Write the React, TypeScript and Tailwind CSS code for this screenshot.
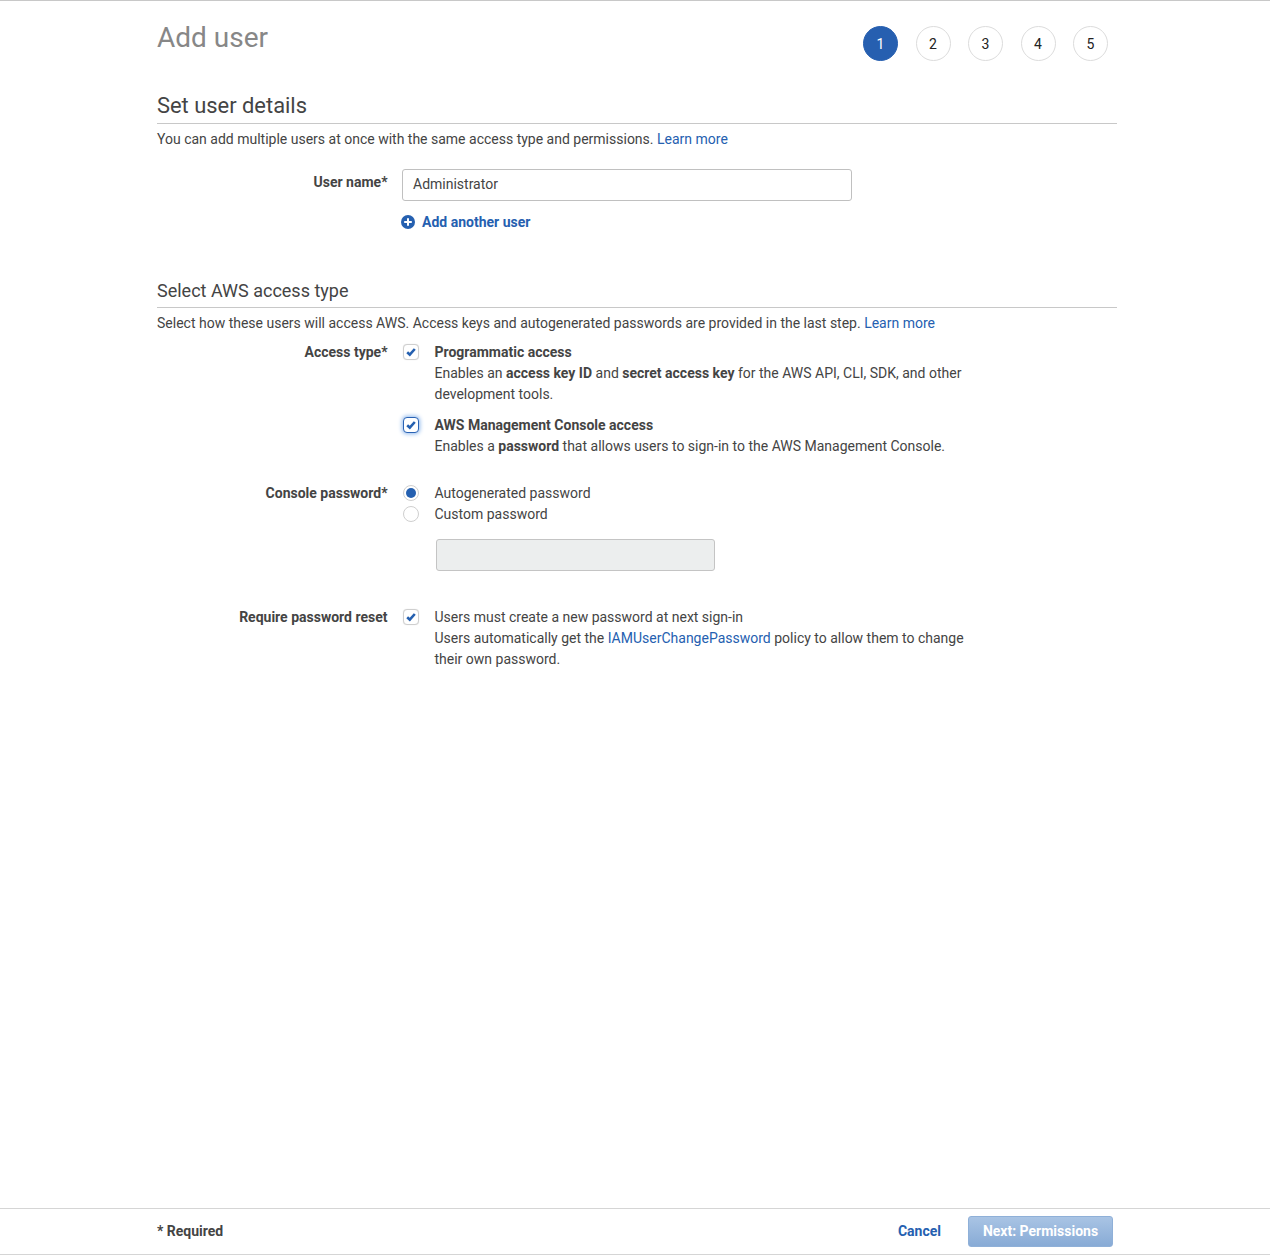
import React from "react";

const Check = ({ focus }: { focus?: boolean }) => (
  <span className={`ml-[1px] flex h-[16px] w-[16px] items-center justify-center rounded-[4px] border bg-white ${focus ? "border-[#2a63b5] shadow-[0_0_4px_1px_#8fb8ec]" : "border-[#cfcfcf] shadow-[0_0_1px_0_#d8d8d8]"}`}>
    <svg width="12" height="12" viewBox="0 0 12 12" fill="none" stroke="#2560b0" strokeWidth="2.6"><path d="M2.2 6.2 L4.8 8.6 L9.8 3" /></svg>
  </span>
);

const Row = ({ label, children, className, labelClass }: { label: string; children: React.ReactNode; className?: string; labelClass?: string }) => (
  <div className={`flex ${className ?? ""}`}>
    <div className={`w-[230.5px] text-right font-bold text-[#444] ${labelClass ?? ""}`}>{label}</div>
    <div className="ml-[14.5px] flex-1">{children}</div>
  </div>
);

const Opt = ({ icon, children }: { icon: React.ReactNode; children: React.ReactNode }) => (
  <div className="flex">
    <div className="flex h-[20px] w-[32.5px] shrink-0 items-center">{icon}</div>
    <div className="w-[540px]">{children}</div>
  </div>
);

export default function App() {
  return (
    <div className="flex h-[1255px] flex-col border-t border-[#c8c8c8] bg-white font-['Roboto',sans-serif] text-[14px] leading-[21px] text-[#444]">
      <div className="flex-1 pl-[157px] pr-[153px]">
        <div className="flex h-[93px] items-start justify-between">
          <h1 className="mt-[19px] text-[28px] leading-[36px] text-[#878787]">Add user</h1>
          <div className="mr-[9px] mt-[25px] flex gap-[17.5px]">
            {[1, 2, 3, 4, 5].map((n) => (
              <div key={n} className={`flex h-[35px] w-[35px] items-center justify-center rounded-full border pt-[1px] ${n === 1 ? "border-[#265fb0] bg-[#265fb0] text-white" : "border-[#dcdcdc] bg-white text-[#222]"}`}>{n}</div>
            ))}
          </div>
        </div>
        <div className="flex h-[30px] items-end border-b border-[#c8c8c8] pb-[4px] text-[21.9px] leading-[26px] text-[#444]">Set user details</div>
        <p className="mt-[5px]">You can add multiple users at once with the same access type and permissions. <span className="text-[#2560b0]">Learn more</span></p>
        <Row label="User name*" className="mt-[19px]" labelClass="pt-[3px]">
          <div className="flex h-[32px] w-[450px] items-center rounded-[3px] border border-[#c0c0c0] px-[10px] pb-[1px] text-[#444]">Administrator</div>
          <div className="-ml-[1px] mt-[11px] flex items-center gap-[7px] font-bold text-[#2560b0]">
            <svg className="-mt-[1px]" width="14" height="14" viewBox="0 0 14 14"><circle cx="7" cy="7" r="7" fill="#2560b0" /><path d="M7 3.2v7.6M3.2 7h7.6" stroke="#fff" strokeWidth="2" /></svg>
            Add another user
          </div>
        </Row>
        <div className="mt-[45px] flex h-[30px] items-end border-b border-[#c8c8c8] pb-[3px] text-[18px] leading-[26px] text-[#444]">Select AWS access type</div>
        <p className="mt-[5px]">Select how these users will access AWS. Access keys and autogenerated passwords are provided in the last step. <span className="text-[#2560b0]">Learn more</span></p>
        <Row label="Access type*" className="mt-[8px]">
          <Opt icon={<Check />}>
            <div className="font-bold">Programmatic access</div>
            Enables an <b>access key ID</b> and <b>secret access key</b> for the AWS API, CLI, SDK, and other development tools.
          </Opt>
          <div className="mt-[10px]">
            <Opt icon={<Check focus />}>
              <div className="font-bold">AWS Management Console access</div>
              Enables a <b>password</b> that allows users to sign-in to the AWS Management Console.
            </Opt>
          </div>
        </Row>
        <Row label="Console password*" className="mt-[26px]">
          <Opt icon={<span className="ml-[1px] flex h-[16px] w-[16px] items-center justify-center rounded-full border border-[#cfcfcf]"><span className="h-[10px] w-[10px] rounded-full bg-[#2560b0]" /></span>}>Autogenerated password</Opt>
          <Opt icon={<span className="ml-[1px] h-[16px] w-[16px] rounded-full border border-[#cfcfcf]" />}>Custom password</Opt>
          <div className="ml-[34px] mt-[14px] h-[32px] w-[279px] rounded-[3px] border border-[#c4c4c4] bg-[#eceeee]" />
        </Row>
        <Row label="Require password reset" className="mt-[36px]">
          <Opt icon={<Check />}>
            Users must create a new password at next sign-in<br />
            Users automatically get the <span className="text-[#2560b0]">IAMUserChangePassword</span> policy to allow them to change their own password.
          </Opt>
        </Row>
      </div>
      <div className="flex h-[47px] items-center justify-between border-y border-[#d5d5d5] pl-[157px] pr-[157px]">
        <div className="font-bold"><span>* Required</span></div>
        <div className="flex items-center gap-[27px] font-bold">
          <span className="text-[#2560b0]">Cancel</span>
          <span className="flex h-[31px] w-[145px] items-center justify-center rounded-[3px] border border-[#8fb0d8] bg-gradient-to-b from-[#a9c4e4] to-[#88abd6] text-white">Next: Permissions</span>
        </div>
      </div>
    </div>
  );
}
